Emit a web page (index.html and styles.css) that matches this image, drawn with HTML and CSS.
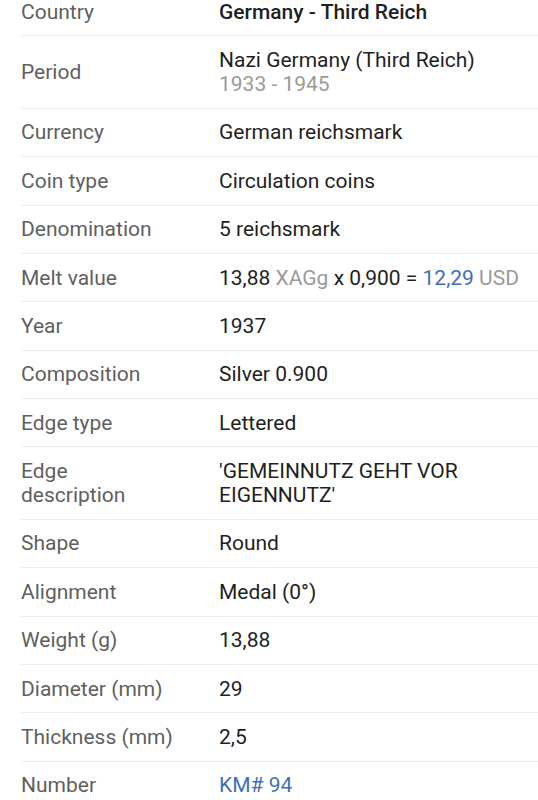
FILE: index.html
```html
<!DOCTYPE html>
<html>
<head>
<meta charset="utf-8">
<link rel="stylesheet" href="styles.css">
</head>
<body>
<div class="table">
  <div class="row"><div class="label">Country</div><div class="value strong">Germany - Third Reich</div></div>
  <div class="row"><div class="label">Period</div><div class="value">Nazi Germany (Third Reich)<br><span class="muted">1933 - 1945</span></div></div>
  <div class="row"><div class="label">Currency</div><div class="value">German reichsmark</div></div>
  <div class="row"><div class="label">Coin type</div><div class="value">Circulation coins</div></div>
  <div class="row"><div class="label">Denomination</div><div class="value">5 reichsmark</div></div>
  <div class="row"><div class="label">Melt value</div><div class="value">13,88 <span class="muted">XAGg</span> x 0,900 = <span class="link">12,29</span> <span class="muted">USD</span></div></div>
  <div class="row"><div class="label">Year</div><div class="value">1937</div></div>
  <div class="row"><div class="label">Composition</div><div class="value">Silver 0.900</div></div>
  <div class="row"><div class="label">Edge type</div><div class="value">Lettered</div></div>
  <div class="row"><div class="label">Edge<br>description</div><div class="value">'GEMEINNUTZ GEHT VOR<br>EIGENNUTZ'</div></div>
  <div class="row"><div class="label">Shape</div><div class="value">Round</div></div>
  <div class="row"><div class="label">Alignment</div><div class="value">Medal (0°)</div></div>
  <div class="row"><div class="label">Weight (g)</div><div class="value">13,88</div></div>
  <div class="row"><div class="label">Diameter (mm)</div><div class="value">29</div></div>
  <div class="row"><div class="label">Thickness (mm)</div><div class="value">2,5</div></div>
  <div class="row"><div class="label">Number</div><div class="value link">KM# 94</div></div>
</div>
</body>
</html>
```
FILE: styles.css
```css
html, body {
  margin: 0;
  padding: 0;
  background: #ffffff;
  overflow: hidden;
}
body {
  font-family: Roboto, "Noto Sans", sans-serif;
  font-size: 21px;
  color: #222222;
}
.table {
  margin-top: -12px;
  padding-left: 21px;
}
.row {
  display: grid;
  grid-template-columns: 198px 1fr;
  align-items: center;
  padding: 11.7px 0;
  line-height: 24px;
  border-bottom: 1px solid #eeeeee;
}
.label {
  color: #5f5f5f;
}
.value {
  color: #1f1f1f;
}
.strong {
  font-weight: 500;
}
.muted {
  color: #9a9a9a;
}
.link {
  color: #3f6fb8;
}
```
